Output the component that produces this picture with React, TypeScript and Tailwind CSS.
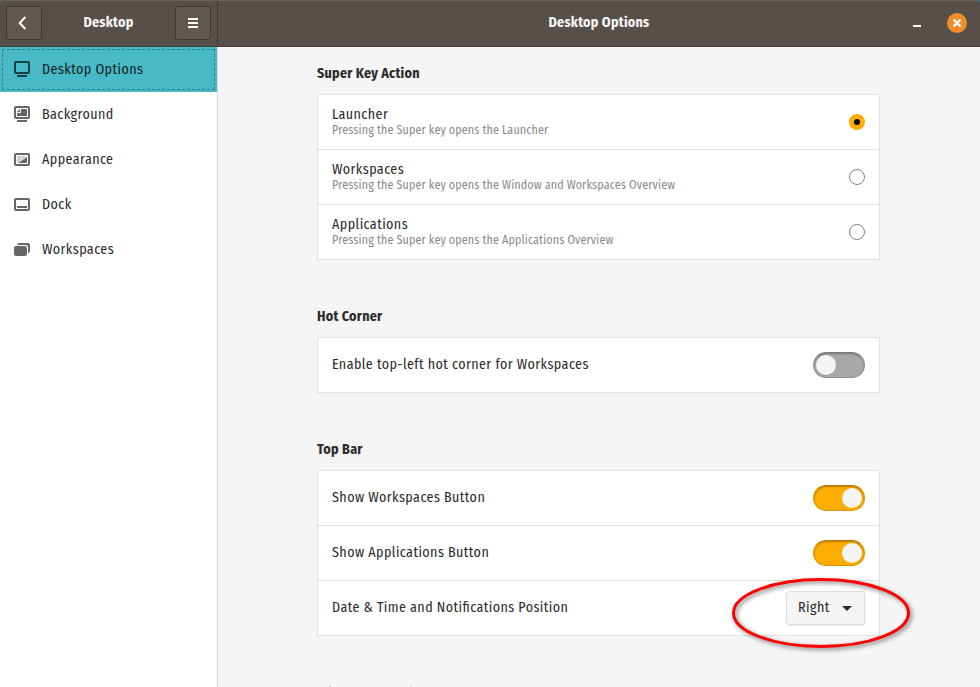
import type { ReactNode } from "react";

const fonts = "[font-family:'Fira_Sans_Condensed','Noto_Sans','Open_Sans',sans-serif] [font-stretch:80%] [font-feature-settings:'liga'_1]";

const icons: Record<string, ReactNode> = {
  options: (
    <>
      <rect x="1" y="1" width="14" height="11" rx="1" fill="none" stroke="currentColor" strokeWidth="2" />
      <path d="M3 14h10v2H3z" fill="currentColor" />
    </>
  ),
  background: (
    <>
      <rect x="1" y="1" width="14" height="11" rx="1" fill="none" stroke="currentColor" strokeWidth="2" />
      <path d="M7 3h6v7H3V7h4z" fill="currentColor" />
      <path d="M6 3v3H3z" fill="currentColor" />
      <path d="M3 14h10v2H3z" fill="currentColor" />
    </>
  ),
  appearance: (
    <>
      <path d="M3 5h10L3 12z" fill="#cfcfcf" />
      <path d="M13 6v6H4z" fill="currentColor" />
      <rect x="1" y="3" width="14" height="11" rx="1" fill="none" stroke="currentColor" strokeWidth="2" />
    </>
  ),
  dock: (
    <>
      <rect x="1" y="3" width="14" height="11" rx="1" fill="none" stroke="currentColor" strokeWidth="2" />
      <path d="M3 10h10v2H3z" fill="currentColor" />
    </>
  ),
  workspaces: (
    <>
      <rect x="0" y="5" width="13" height="10" rx="2" fill="currentColor" />
      <path d="M3 4c0-1 1-2 2-2h9c1 0 2 1 2 2v6c0 1-1 2-2 2V6c0-1-1-2-2-2z" fill="currentColor" />
    </>
  ),
};

const nav = [
  { icon: "options", label: "Desktop Options", active: true },
  { icon: "background", label: "Background" },
  { icon: "appearance", label: "Appearance" },
  { icon: "dock", label: "Dock" },
  { icon: "workspaces", label: "Workspaces" },
];

function Section({ title, children }: { title: string; children?: ReactNode }) {
  return (
    <section className="mb-[47px]">
      <h2 className="mb-2.5 h-5 text-[14px] leading-5 font-bold tracking-[0.25px] whitespace-nowrap">{title}</h2>
      {children && (
        <div className="divide-y divide-[#e1e1e1] border border-[#e1e1e1] bg-white">{children}</div>
      )}
    </section>
  );
}

function Row({ label, hint, children }: { label: string; hint?: string; children: ReactNode }) {
  return (
    <div className="box-content flex h-[54px] items-center justify-between px-[14px]">
      <div className={hint ? "whitespace-nowrap" : "pb-0.5 whitespace-nowrap"}>
        <div className="text-[14px] leading-[17px] tracking-[0.42px]">{label}</div>
        {hint && <div className="text-[12px] leading-[15px] tracking-[0.13px] text-[#8b8b8b]">{hint}</div>}
      </div>
      {children}
    </div>
  );
}

function Radio({ on }: { on?: boolean }) {
  return on ? (
    <span className="flex size-4 items-center justify-center rounded-full bg-[#ffad00]">
      <span className="size-1.5 rounded-full bg-black" />
    </span>
  ) : (
    <span className="size-4 rounded-full border border-[#838383] bg-white" />
  );
}

function Switch({ on }: { on?: boolean }) {
  return (
    <span
      className={
        on
          ? "flex h-[26px] w-[52px] items-center justify-end rounded-full border border-[#dc9600] border-t-[#b97e00] bg-[#ffad00] px-0.5 shadow-[inset_0_1px_2px_rgba(0,0,0,0.3)]"
          : "flex h-[26px] w-[52px] items-center rounded-full border border-[#939393] border-t-[#7c7c7c] bg-[#a8a8a8] px-0.5 shadow-[inset_0_1px_2px_rgba(0,0,0,0.3)]"
      }
    >
      <span className="size-5 rounded-full bg-[#f5f5f5]" />
    </span>
  );
}

export default function App() {
  return (
    <div className={`relative flex h-[687px] w-[980px] flex-col overflow-hidden bg-[#2b7f87] text-[#2b2b2b] ${fonts}`}>
      <header className="flex h-[47px] shrink-0 rounded-t-[4px] border-t border-b border-t-[#6c625c] border-b-[#423c38] bg-[#574f4a] text-[14px] font-bold tracking-[0.25px] text-[#f6f6f6]">
        <div className="flex w-[218px] items-center justify-between border-r border-[#423c38] px-1.5 pb-px">
          <button className="flex h-[34px] w-9 items-center justify-center rounded-[3px] border border-[#3f3935] bg-[#60574f]">
            <svg width="16" height="16" viewBox="0 0 16 16">
              <path d="M9.3 2 3.7 8l5.6 6" fill="none" stroke="#fff" strokeWidth="2" />
            </svg>
          </button>
          <span className="pb-0.5">Desktop</span>
          <button className="flex h-[34px] w-9 items-center justify-center rounded-[3px] border border-[#3f3935] bg-[#60574f]">
            <svg width="10" height="10" viewBox="0 0 10 10">
              <path d="M0 0h10v2H0zM0 4h10v2H0zM0 8h10v2H0z" fill="#fff" />
            </svg>
          </button>
        </div>
        <div className="grid flex-1 grid-cols-[1fr_auto_1fr] items-center pb-px">
          <span />
          <span className="pb-0.5">Desktop Options</span>
          <span className="flex items-center justify-end gap-[26px] pr-[13px]">
            <svg width="8" height="20" viewBox="0 0 8 20">
              <path d="M0 12h8v2H0z" fill="#fff" />
            </svg>
            <svg width="20" height="20" viewBox="0 0 20 20">
              <circle cx="10" cy="10" r="10" fill="#f28d2b" />
              <path d="m6.5 6.5 7 7m0-7-7 7" stroke="#fff" strokeWidth="2.4" />
            </svg>
          </span>
        </div>
      </header>
      <div className="flex min-h-0 flex-1 bg-[#f5f5f5]">
        <nav className="w-[218px] shrink-0 border-r border-[#d8d8d8] bg-white text-[14px] tracking-[0.42px]">
          {nav.map((n) => (
            <div key={n.label} className={n.active ? "h-[45px] bg-[#48b9c7] p-0.5 text-[#111d20]" : "h-[45px] p-0.5"}>
              <div className={n.active ? "flex h-full items-center gap-3 border border-dashed border-[#32818b] px-[11px]" : "flex h-full items-center gap-3 border border-transparent px-[11px]"}>
                <svg width="16" height="17" viewBox="0 0 16 17" className={n.active ? "text-[#193e43]" : "text-[#666]"}>
                  {icons[n.icon]}
                </svg>
                <span>{n.label}</span>
              </div>
            </div>
          ))}
        </nav>
        <main className="min-w-0 flex-1 overflow-hidden pt-[17px] pr-[100px] pl-[99px]">
          <Section title="Super Key Action">
            <Row label="Launcher" hint="Pressing the Super key opens the Launcher"><Radio on /></Row>
            <Row label="Workspaces" hint="Pressing the Super key opens the Window and Workspaces Overview"><Radio /></Row>
            <Row label="Applications" hint="Pressing the Super key opens the Applications Overview"><Radio /></Row>
          </Section>
          <Section title="Hot Corner">
            <Row label="Enable top-left hot corner for Workspaces"><Switch /></Row>
          </Section>
          <Section title="Top Bar">
            <Row label="Show Workspaces Button"><Switch on /></Row>
            <Row label="Show Applications Button"><Switch on /></Row>
            <Row label="Date & Time and Notifications Position">
              <button className="flex h-[34px] w-[79px] items-center justify-between rounded-[3px] border border-[#dcdcdc] bg-[#f5f5f5] pr-3 pl-[11px] text-[14px] tracking-[0.42px] shadow-[0_1px_1px_rgba(0,0,0,0.08)]">
                <span className="pb-0.5">Right</span>
                <svg width="10" height="5" viewBox="0 0 10 5"><path d="M0 0h10L5 5z" fill="#2b2b2b" /></svg>
              </button>
            </Row>
          </Section>
          <div className="pt-px">
            <Section title="Window Controls" />
          </div>
        </main>
      </div>
      <svg className="absolute top-[570px] left-[725px]" width="200" height="90" viewBox="0 0 200 90">
        <ellipse cx="96" cy="43" rx="87.5" ry="33.5" fill="none" stroke="#f00" strokeWidth="3" className="drop-shadow-[2px_2px_2px_rgba(0,0,0,0.5)]" />
      </svg>
    </div>
  );
}
